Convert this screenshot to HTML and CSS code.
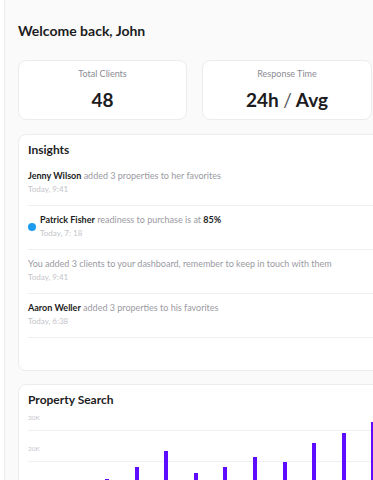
FILE: index.html
```html
<!DOCTYPE html>
<html lang="en">
<head>
    <meta charset="UTF-8">
    <meta name="viewport" content="width=device-width, initial-scale=1.0">
    <title>Dashboard</title>
    <link rel="stylesheet" href="styles.css">
</head>
<body>
    <div class="page">
        <h1 class="welcome">Welcome back, John</h1>

        <div class="stats">
            <div class="stat-card">
                <p class="stat-label">Total Clients</p>
                <p class="stat-value">48</p>
            </div>
            <div class="stat-card">
                <p class="stat-label">Response Time</p>
                <p class="stat-value">24h <span class="slash">/</span> Avg</p>
            </div>
        </div>

        <div class="card insights">
            <h2 class="card-title">Insights</h2>
            <div class="item">
                <p class="item-text"><b>Jenny Wilson</b> added 3 properties to her favorites</p>
                <p class="item-time">Today, 9:41</p>
            </div>
            <div class="item item-flag">
                <span class="dot"></span>
                <div>
                    <p class="item-text"><b>Patrick Fisher</b> readiness to purchase is at <b>85%</b></p>
                    <p class="item-time">Today, 7: 18</p>
                </div>
            </div>
            <div class="item">
                <p class="item-text">You added 3 clients to your dashboard, remember to keep in touch with them</p>
                <p class="item-time">Today, 9:41</p>
            </div>
            <div class="item">
                <p class="item-text"><b>Aaron Weller</b> added 3 properties to his favorites</p>
                <p class="item-time">Today, 6:38</p>
            </div>
        </div>

        <div class="card search">
            <h2 class="card-title">Property Search</h2>
            <div class="chart">
                <div class="row"><span class="tick">30K</span></div>
                <div class="row"><span class="tick">20K</span></div>
                <div class="bars">
                    <span class="bar" style="height:44px"></span>
                    <span class="bar" style="height:56px"></span>
                    <span class="bar" style="height:72px"></span>
                    <span class="bar" style="height:50px"></span>
                    <span class="bar" style="height:56px"></span>
                    <span class="bar" style="height:66px"></span>
                    <span class="bar" style="height:61px"></span>
                    <span class="bar" style="height:80px"></span>
                    <span class="bar" style="height:90px"></span>
                    <span class="bar" style="height:101px"></span>
                </div>
            </div>
        </div>
    </div>
</body>
</html>
```

FILE: styles.css
```css
html, body { margin: 0; overflow: hidden; }
body { background: #fff; font-family: "Lato", "Liberation Sans", sans-serif; color: #1c1c22; }
p, h1, h2 { margin: 0; }

.page { margin-left: 4px; border-left: 1px solid #ececef; background: #fafafa; height: 480px; padding: 21px 0 0 13px; box-sizing: border-box; overflow: hidden; }

.welcome { font-size: 14px; line-height: 20px; font-weight: 700; margin-bottom: 19px; }

.stats { display: grid; grid-template-columns: 169px 170px; gap: 15px; margin-bottom: 14px; }
.stat-card { background: #fff; border: 1px solid #ececef; border-radius: 8px; padding: 7px 0; text-align: center; }
.stat-label { font-size: 9px; line-height: 12px; color: #8b8b93; }
.stat-value { font-size: 19px; line-height: 24px; font-weight: 700; margin-top: 8px; }
.slash { font-weight: 400; color: #55555c; }

.card { width: 400px; background: #fff; border: 1px solid #ececef; border-radius: 8px; padding: 7px 0 0 9px; box-sizing: border-box; }
.card-title { font-size: 12px; line-height: 15px; font-weight: 700; margin-bottom: 5px; }

.insights { height: 237px; margin-bottom: 13px; }
.item { padding: 8px 0 10px; border-bottom: 1px solid #efeff2; }
.item-text { font-size: 9px; line-height: 12px; color: #9a9aa2; white-space: nowrap; }
.item-text b { color: #1c1c22; font-weight: 700; }
.item-time { font-size: 8px; line-height: 12px; margin-top: 1px; color: #c4c4ca; }
.item-flag { display: flex; align-items: center; gap: 4px; }
.dot { width: 8px; height: 8px; border-radius: 50%; background: #1d9bf0; }

.search { height: 200px; }
.search .card-title { margin-bottom: 0; }
.chart { position: relative; padding-top: 5px; }
.row { height: 18px; margin-bottom: 12px; border-bottom: 1px solid #f0f0f2; display: flex; align-items: flex-start; background: linear-gradient(#fff, #fff) no-repeat 0 0 / 31px 100%; }
.tick { font-size: 6.5px; line-height: 12px; color: #c8c8ce; }
.bars { position: absolute; top: 0; left: 0; height: 116px; display: flex; align-items: flex-end; gap: 25.6px; padding-left: 77px; }
.bar { width: 4px; background: #5e0cff; }
```
